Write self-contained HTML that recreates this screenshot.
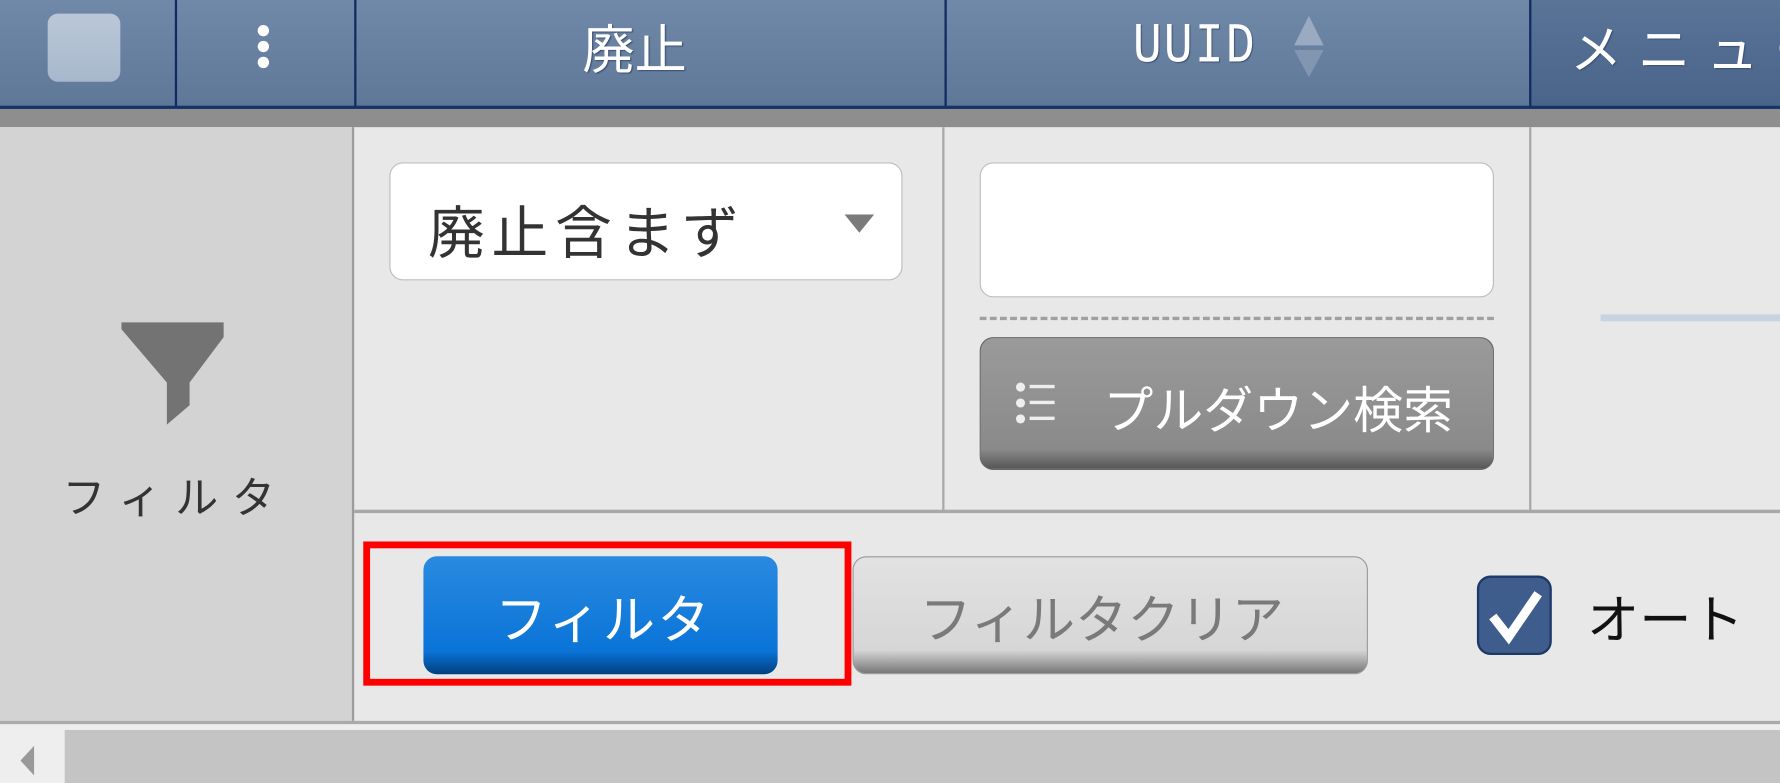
<!DOCTYPE html>
<html><head><meta charset="utf-8"><style>
html,body{margin:0;padding:0;width:1780px;height:783px;overflow:hidden;background:#e8e8e8}
#w{position:absolute;left:0;top:0;width:1568px;height:690px;transform:scale(1.13520);transform-origin:0 0;font-family:"Liberation Sans","Noto Sans CJK JP",sans-serif;background:#e8e8e8}
.a{position:absolute;white-space:nowrap}
.hd{top:0;height:93px;background:linear-gradient(#7189a8,#5f7898)}
.vd{top:0;height:95px;width:2px;background:#0e2c62}
.ht{color:#fff;font-size:46px;top:14px;line-height:60px;text-shadow:1px 1px 1px #3a4f70}
</style></head><body><div id="w">
<div class="a hd" style="left:0;width:1348px"></div>
<div class="a hd" style="left:1348px;width:220px;background:linear-gradient(#5a7498,#4a648a)"></div>
<div class="a vd" style="left:154px"></div>
<div class="a vd" style="left:312px"></div>
<div class="a vd" style="left:832px"></div>
<div class="a vd" style="left:1347px"></div>
<div class="a" style="left:0;top:93px;width:1568px;height:3px;background:#143468"></div>
<div class="a" style="left:42px;top:12px;width:64px;height:60px;border-radius:9px;background:linear-gradient(#bac7d8,#a8b8cc)"></div>
<div class="a" style="left:227px;top:22px;width:10px;height:10px;border-radius:50%;background:#fff"></div>
<div class="a" style="left:227px;top:36px;width:10px;height:10px;border-radius:50%;background:#fff"></div>
<div class="a" style="left:227px;top:50px;width:10px;height:10px;border-radius:50%;background:#fff"></div>
<div class="a ht" style="left:513px">廃止</div>
<div class="a ht" style="left:998px;font-family:'Liberation Mono',monospace;font-size:50px;transform:scaleX(0.85);transform-origin:0 0;letter-spacing:2px;top:12px">UUID</div>
<svg class="a" style="left:1138px;top:12px" width="30" height="60"><path d="M15 2 L28 28 H2Z" fill="#9aaac0"/><path d="M15 56 L28 32 H2Z" fill="#8296b2"/></svg>
<div class="a ht" style="left:1383px;letter-spacing:14px">メニュー</div>
<div class="a" style="left:0;top:96px;width:1568px;height:16px;background:#8e8e8e"></div>
<div class="a" style="left:0;top:112px;width:310px;height:523px;background:#d3d3d3;border-right:2px solid #9c9c9c"></div>
<div class="a" style="left:830px;top:112px;width:2px;height:338px;background:#a8a8a8"></div>
<div class="a" style="left:1347px;top:112px;width:2px;height:338px;background:#a8a8a8"></div>
<div class="a" style="left:312px;top:449px;width:1256px;height:3px;background:#a8a8a8"></div>
<svg class="a" style="left:105px;top:282px" width="95" height="95"><path d="M2 2 H92 V15 L62 55 V75 L42 92 V55 L2 8Z" fill="#737373"/></svg>
<div class="a" style="left:55px;top:408px;font-size:38px;color:#333;letter-spacing:12px">フィルタ</div>
<div class="a" style="left:343px;top:143px;width:450px;height:102px;background:#fff;border:1px solid #bdbdbd;border-radius:12px"></div>
<div class="a" style="left:377px;top:166px;font-size:50px;color:#333;letter-spacing:6px">廃止含まず</div>
<svg class="a" style="left:742px;top:187px" width="30" height="20"><path d="M2 2 H28 L15 18Z" fill="#7a7a7a"/></svg>
<div class="a" style="left:863px;top:143px;width:451px;height:117px;background:#fff;border:1px solid #bdbdbd;border-radius:12px"></div>
<div class="a" style="left:863px;top:279px;width:453px;border-top:3px dashed #a0a0a0"></div>
<div class="a" style="left:863px;top:297px;width:451px;height:115px;border-radius:12px;background:linear-gradient(#9a9a9a,#8a8a8a 85%,#555);border:1px solid #666"></div>
<svg class="a" style="left:893px;top:336px" width="40" height="40"><g fill="#eee"><circle cx="6" cy="5" r="4"/><circle cx="6" cy="19" r="4"/><circle cx="6" cy="33" r="4"/><rect x="14" y="3" width="22" height="3"/><rect x="14" y="17" width="22" height="3"/><rect x="14" y="31" width="22" height="3"/></g></svg>
<div class="a" style="left:972px;top:326px;font-size:44px;color:#fff">プルダウン検索</div>
<div class="a" style="left:1410px;top:277px;width:158px;height:6px;background:#c8d3e0"></div>
<div class="a" style="left:320px;top:477px;width:418px;height:115px;border:6px solid #f00"></div>
<div class="a" style="left:373px;top:490px;width:312px;height:104px;border-radius:12px;background:linear-gradient(#2a8ae0,#0a74d8 80%,#023f80);"></div>
<div class="a" style="left:436px;top:510px;font-size:46px;color:#fff;letter-spacing:2px">フィルタ</div>
<div class="a" style="left:751px;top:490px;width:454px;height:104px;border-radius:12px;background:linear-gradient(#e2e2e2,#d6d6d6 80%,#777);border:1px solid #999;box-sizing:border-box"></div>
<div class="a" style="left:810px;top:510px;font-size:46px;color:#7a7a7a">フィルタクリア</div>
<div class="a" style="left:1301px;top:507px;width:66px;height:70px;border-radius:12px;background:#3e5c8c;border:2px solid #1e3868;box-sizing:border-box"></div>
<svg class="a" style="left:1301px;top:507px" width="66" height="70"><path d="M14 36 L28 54 L54 16" stroke="#fff" stroke-width="8" fill="none"/></svg>
<div class="a" style="left:1398px;top:510px;font-size:46px;color:#111">オート</div>
<div class="a" style="left:0;top:635px;width:1568px;height:3px;background:#aaa"></div>
<div class="a" style="left:0;top:638px;width:1568px;height:52px;background:#eee"></div>
<div class="a" style="left:57px;top:643px;width:1511px;height:47px;background:#c4c4c4"></div>
<svg class="a" style="left:14px;top:655px" width="20" height="30"><path d="M16 2 L4 15 L16 28Z" fill="#999"/></svg>
</div></body></html>
